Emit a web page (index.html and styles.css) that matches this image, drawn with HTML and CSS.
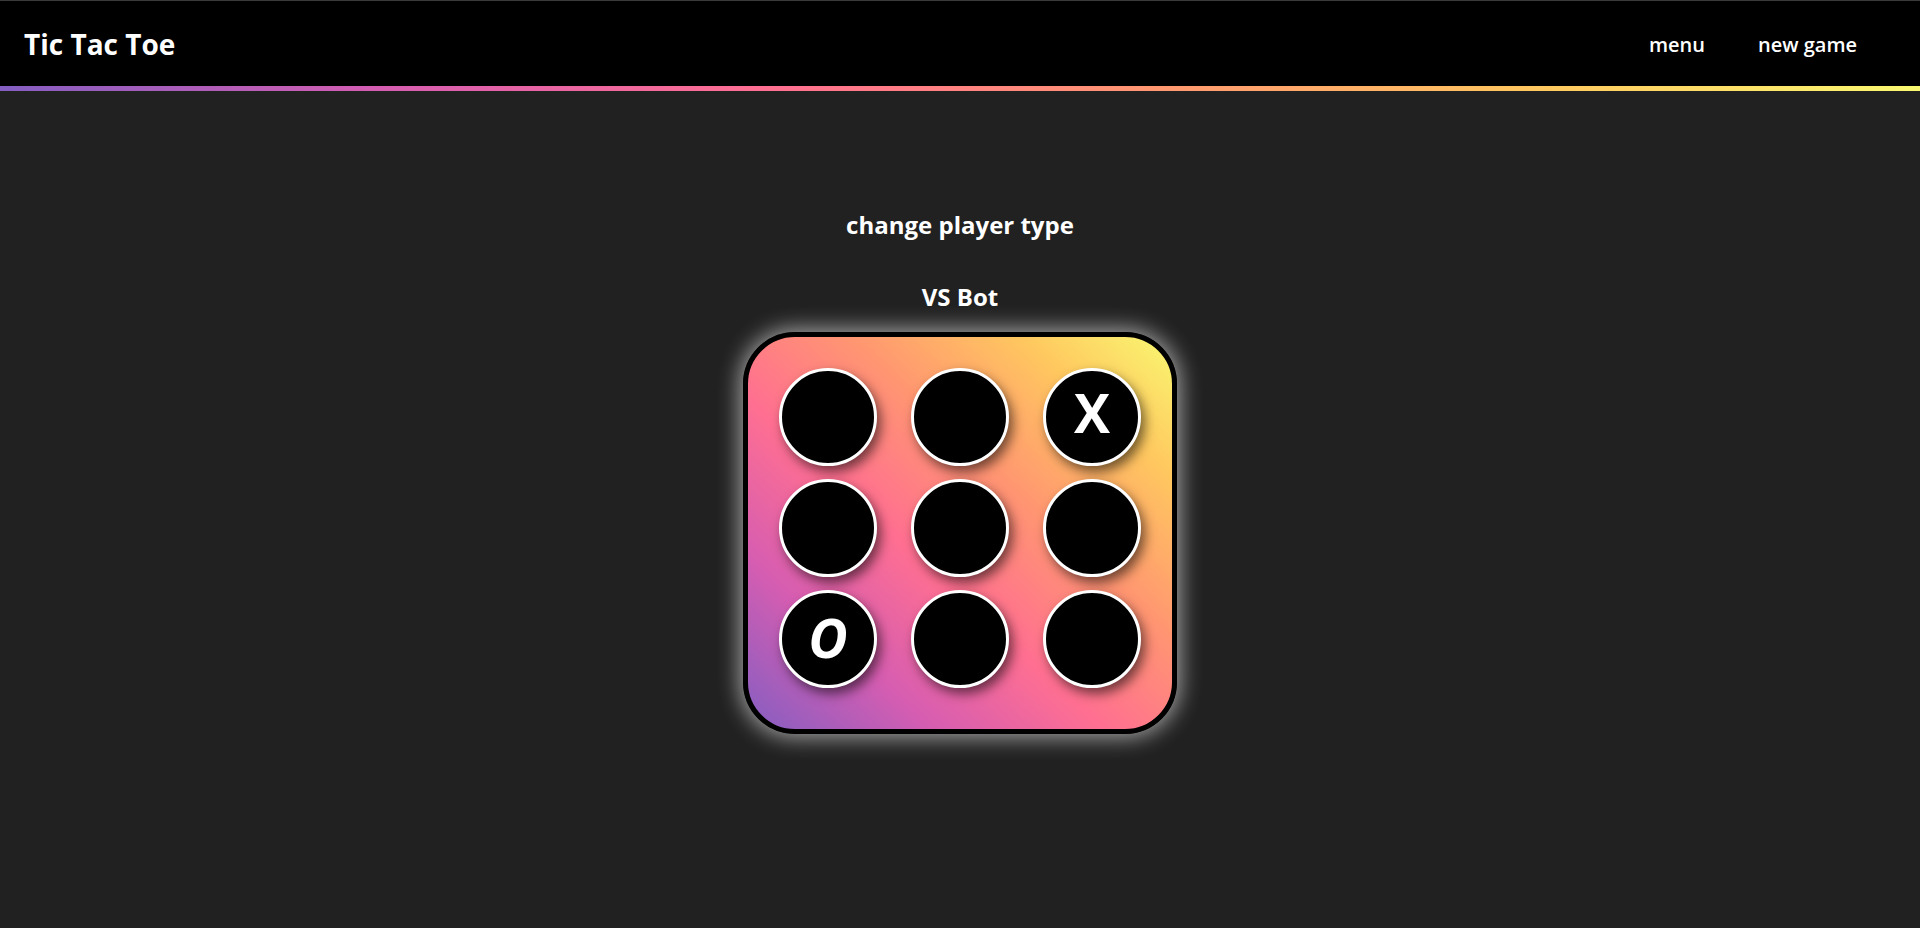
FILE: index.html
```html
<!DOCTYPE html>
<html lang="en">
<head>
<meta charset="utf-8">
<title>Tic Tac Toe</title>
<link rel="stylesheet" href="styles.css">
</head>
<body>
<header class="topbar">
  <div class="brand">Tic Tac Toe</div>
  <nav class="nav">
    <a class="nav-link" href="#">menu</a>
    <a class="nav-link" href="#">new game</a>
  </nav>
</header>
<div class="accent"></div>
<main class="game">
  <h2 class="label">change player type</h2>
  <h2 class="label mode">VS Bot</h2>
  <div class="board">
    <div class="cell"></div>
    <div class="cell"></div>
    <div class="cell mark-x">X</div>
    <div class="cell"></div>
    <div class="cell"></div>
    <div class="cell"></div>
    <div class="cell mark-o">O</div>
    <div class="cell"></div>
    <div class="cell"></div>
  </div>
</main>
</body>
</html>
```

FILE: styles.css
```css
* { box-sizing: border-box; }

html, body {
  margin: 0;
  padding: 0;
}

body {
  background: #212121;
  color: #fff;
  font-family: "Comic Sans MS", "Open Sans", sans-serif;
  min-height: 928px;
}

.topbar {
  height: 86px;
  background: #000;
  border-top: 1px solid #3a3a3a;
  display: flex;
  align-items: center;
  justify-content: space-between;
  padding: 0 63px 0 24px;
}

.brand {
  font-size: 28px;
  font-weight: 700;
}

.nav {
  display: flex;
  gap: 53px;
  padding-top: 2px;
}

.nav-link {
  color: #fff;
  text-decoration: none;
  font-size: 20px;
  font-weight: 600;
}

.accent {
  height: 5px;
  background: linear-gradient(to right, #845ec2, #d65db1, #ff6f91, #ff9671, #ffc75f, #f9f871);
}

.game {
  display: flex;
  flex-direction: column;
  align-items: center;
  padding-top: 118px;
}

.label {
  margin: 0;
  font-size: 24px;
  font-weight: 700;
  line-height: 32px;
}

.mode {
  margin-top: 40px;
}

.board {
  margin-top: 19px;
  width: 434px;
  height: 402px;
  border: 5px solid #000;
  border-radius: 52px;
  padding: 31px 31px 39px 31px;
  background: linear-gradient(to top right, #845ec2, #d65db1 22%, #ff6f91 42%, #ff9671 62%, #ffc75f 82%, #f9f871);
  box-shadow: 0 0 22px 3px rgba(255, 255, 255, 0.6);
  display: grid;
  grid-template-columns: repeat(3, 98px);
  grid-auto-rows: 98px;
  justify-content: space-between;
  row-gap: 13px;
}

.cell {
  width: 98px;
  height: 98px;
  border-radius: 50%;
  background: #000;
  border: 3px solid #fff;
  box-shadow: 4px 6px 12px rgba(0, 0, 0, 0.55);
  display: flex;
  align-items: center;
  justify-content: center;
  font-family: "Open Sans", sans-serif;
  font-weight: 700;
  font-size: 54px;
  line-height: 1;
  color: #fff;
}

.mark-x {
  padding-bottom: 10px;
}

.mark-o {
  padding-bottom: 4px;
  font-style: italic;
}
```
